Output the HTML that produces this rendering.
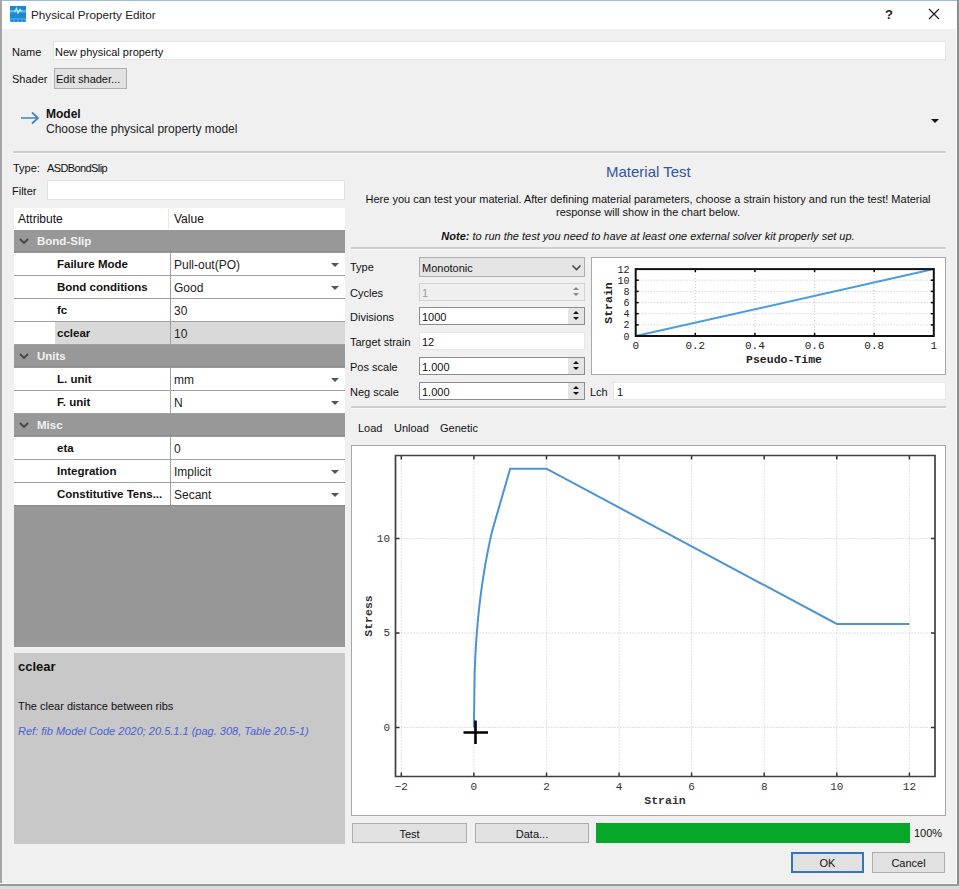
<!DOCTYPE html>
<html><head><meta charset="utf-8">
<style>
*{box-sizing:border-box;margin:0;padding:0}
html,body{width:959px;height:889px;overflow:hidden;background:#f0f0f0}
body{position:relative;font-family:"Liberation Sans",sans-serif;font-size:11px;color:#111}
.a{position:absolute}
.t{position:absolute;white-space:nowrap;line-height:1}
.b{font-weight:bold}
.dd{position:absolute;width:0;height:0;border-left:4px solid transparent;border-right:4px solid transparent;border-top:4px solid #555}
</style></head><body>
<div class="a" style="left:0px;top:0px;width:959px;height:1px;background:#9dbcdc;"></div>
<div class="a" style="left:0px;top:1px;width:959px;height:28px;background:#fff;"></div>
<div class="a" style="left:0px;top:0px;width:2px;height:889px;background:#a5a5a5;"></div>
<div class="a" style="left:956px;top:1px;width:1px;height:884px;background:#fafafa;"></div>
<div class="a" style="left:957px;top:0px;width:2px;height:889px;background:#8e8e8e;"></div>
<div class="a" style="left:0px;top:883px;width:957px;height:1px;background:#fafafa;"></div>
<div class="a" style="left:0px;top:884px;width:959px;height:2px;background:#999;"></div>
<div class="a" style="left:0px;top:886px;width:959px;height:3px;background:#dcdcdc;"></div>
<svg class="a" style="left:10px;top:6px" width="16" height="16"><rect width="16" height="16" fill="#1d88cc"/><rect y="4" width="16" height="2.5" fill="#5ab8e8"/><rect y="12" width="16" height="4" fill="#3fa3e8"/><path d="M1.5 14.5 H3 M5 14.5 H7 M9 14.5 H11 M13 14.5 H14.5" stroke="#1a6fb8" stroke-width="1.4"/><path d="M4.5 6 L6.5 2.5 L8 7 L10 3.5 L11.5 5.5" fill="none" stroke="#a8eaff" stroke-width="1.5"/></svg>
<div class="t" style="left:31px;top:9px;font-size:11.7px;color:#222">Physical Property Editor</div>
<div class="t" style="left:885px;top:8px;font-size:13px;font-weight:bold;color:#222">?</div>
<svg class="a" style="left:928px;top:8px" width="12" height="12"><path d="M1 1 L11 11 M11 1 L1 11" stroke="#222" stroke-width="1.3"/></svg>
<div class="t" style="left:12px;top:47px;">Name</div>
<div class="a" style="left:53px;top:41px;width:893px;height:19px;background:#fff;border:1px solid #e6e6e6"></div>
<div class="t" style="left:55px;top:47px;">New physical property</div>
<div class="t" style="left:12px;top:74px;">Shader</div>
<div class="a" style="left:54px;top:68px;width:73px;height:21px;background:#e1e1e1;border:1px solid #adadad"></div>
<div class="t" style="left:56px;top:74px;">Edit shader...</div>
<svg class="a" style="left:20px;top:110px" width="20" height="16"><path d="M1 8 H18 M12 2.5 L18 8 L12 13.5" fill="none" stroke="#3a86c8" stroke-width="1.7"/></svg>
<div class="t" style="left:46px;top:108px;font-size:12px;font-weight:bold">Model</div>
<div class="t" style="left:46px;top:123px;font-size:12px;color:#222">Choose the physical property model</div>
<div class="a" style="left:931px;top:119px;width:0;height:0;border-left:4px solid transparent;border-right:4px solid transparent;border-top:4px solid #111"></div>
<div class="a" style="left:13px;top:151px;width:933px;height:2px;background:#cecece;"></div>
<div class="a" style="left:13px;top:153px;width:933px;height:1px;background:#f8f8f8;"></div>
<div class="t" style="left:13px;top:163px;">Type:</div>
<div class="t" style="left:47px;top:163px;letter-spacing:-0.6px">ASDBondSlip</div>
<div class="t" style="left:12px;top:186px;">Filter</div>
<div class="a" style="left:47px;top:180px;width:298px;height:20px;background:#fff;border:1px solid #e3e3e3"></div>
<div class="a" style="left:14px;top:208px;width:331px;height:22px;background:#fff;"></div>
<div class="a" style="left:168px;top:209px;width:1px;height:20px;background:#e8e8e8;"></div>
<div class="t" style="left:18px;top:213px;font-size:12px">Attribute</div>
<div class="t" style="left:174px;top:213px;font-size:12px">Value</div>
<div class="a" style="left:14px;top:230px;width:331px;height:23px;background:#989898;"></div>
<div class="a" style="left:14px;top:251px;width:331px;height:1px;background:#8c8c8c;"></div>
<svg class="a" style="left:19px;top:238px" width="10" height="7"><path d="M1 1 L5 5 L9 1" fill="none" stroke="#444" stroke-width="1.8"/></svg>
<div class="t" style="left:37px;top:236px;font-size:11.5px;font-weight:bold;color:#f2f2f2">Bond-Slip</div>
<div class="a" style="left:14px;top:253px;width:331px;height:23px;background:#fff;"></div>
<div class="a" style="left:14px;top:275px;width:331px;height:1px;background:#a0a0a0;"></div>
<div class="a" style="left:170px;top:253px;width:1px;height:23px;background:#a0a0a0;"></div>
<div class="t" style="left:57px;top:259px;font-size:11.5px;font-weight:bold;color:#111">Failure Mode</div>
<div class="t" style="left:174px;top:259px;font-size:12px;color:#222">Pull-out(PO)</div>
<div class="dd" style="left:331px;top:263px"></div>
<div class="a" style="left:14px;top:276px;width:331px;height:23px;background:#fff;"></div>
<div class="a" style="left:14px;top:298px;width:331px;height:1px;background:#a0a0a0;"></div>
<div class="a" style="left:170px;top:276px;width:1px;height:23px;background:#a0a0a0;"></div>
<div class="t" style="left:57px;top:282px;font-size:11.5px;font-weight:bold;color:#111">Bond conditions</div>
<div class="t" style="left:174px;top:282px;font-size:12px;color:#222">Good</div>
<div class="dd" style="left:331px;top:286px"></div>
<div class="a" style="left:14px;top:299px;width:331px;height:23px;background:#fff;"></div>
<div class="a" style="left:14px;top:321px;width:331px;height:1px;background:#a0a0a0;"></div>
<div class="a" style="left:170px;top:299px;width:1px;height:23px;background:#a0a0a0;"></div>
<div class="t" style="left:57px;top:305px;font-size:11.5px;font-weight:bold;color:#111">fc</div>
<div class="t" style="left:174px;top:305px;font-size:12px;color:#222">30</div>
<div class="a" style="left:14px;top:322px;width:331px;height:23px;background:#fff;"></div>
<div class="a" style="left:55px;top:322px;width:290px;height:22px;background:#d9d9d9;"></div>
<div class="a" style="left:14px;top:344px;width:331px;height:1px;background:#a0a0a0;"></div>
<div class="a" style="left:170px;top:322px;width:1px;height:23px;background:#a0a0a0;"></div>
<div class="t" style="left:57px;top:328px;font-size:11.5px;font-weight:bold;color:#111">cclear</div>
<div class="t" style="left:174px;top:328px;font-size:12px;color:#222">10</div>
<div class="a" style="left:14px;top:345px;width:331px;height:23px;background:#989898;"></div>
<div class="a" style="left:14px;top:366px;width:331px;height:1px;background:#8c8c8c;"></div>
<svg class="a" style="left:19px;top:353px" width="10" height="7"><path d="M1 1 L5 5 L9 1" fill="none" stroke="#444" stroke-width="1.8"/></svg>
<div class="t" style="left:37px;top:351px;font-size:11.5px;font-weight:bold;color:#f2f2f2">Units</div>
<div class="a" style="left:14px;top:368px;width:331px;height:23px;background:#fff;"></div>
<div class="a" style="left:14px;top:390px;width:331px;height:1px;background:#a0a0a0;"></div>
<div class="a" style="left:170px;top:368px;width:1px;height:23px;background:#a0a0a0;"></div>
<div class="t" style="left:57px;top:374px;font-size:11.5px;font-weight:bold;color:#111">L. unit</div>
<div class="t" style="left:174px;top:374px;font-size:12px;color:#222">mm</div>
<div class="dd" style="left:331px;top:378px"></div>
<div class="a" style="left:14px;top:391px;width:331px;height:23px;background:#fff;"></div>
<div class="a" style="left:14px;top:413px;width:331px;height:1px;background:#a0a0a0;"></div>
<div class="a" style="left:170px;top:391px;width:1px;height:23px;background:#a0a0a0;"></div>
<div class="t" style="left:57px;top:397px;font-size:11.5px;font-weight:bold;color:#111">F. unit</div>
<div class="t" style="left:174px;top:397px;font-size:12px;color:#222">N</div>
<div class="dd" style="left:331px;top:401px"></div>
<div class="a" style="left:14px;top:414px;width:331px;height:23px;background:#989898;"></div>
<div class="a" style="left:14px;top:435px;width:331px;height:1px;background:#8c8c8c;"></div>
<svg class="a" style="left:19px;top:422px" width="10" height="7"><path d="M1 1 L5 5 L9 1" fill="none" stroke="#444" stroke-width="1.8"/></svg>
<div class="t" style="left:37px;top:420px;font-size:11.5px;font-weight:bold;color:#f2f2f2">Misc</div>
<div class="a" style="left:14px;top:437px;width:331px;height:23px;background:#fff;"></div>
<div class="a" style="left:14px;top:459px;width:331px;height:1px;background:#a0a0a0;"></div>
<div class="a" style="left:170px;top:437px;width:1px;height:23px;background:#a0a0a0;"></div>
<div class="t" style="left:57px;top:443px;font-size:11.5px;font-weight:bold;color:#111">eta</div>
<div class="t" style="left:174px;top:443px;font-size:12px;color:#222">0</div>
<div class="a" style="left:14px;top:460px;width:331px;height:23px;background:#fff;"></div>
<div class="a" style="left:14px;top:482px;width:331px;height:1px;background:#a0a0a0;"></div>
<div class="a" style="left:170px;top:460px;width:1px;height:23px;background:#a0a0a0;"></div>
<div class="t" style="left:57px;top:466px;font-size:11.5px;font-weight:bold;color:#111">Integration</div>
<div class="t" style="left:174px;top:466px;font-size:12px;color:#222">Implicit</div>
<div class="dd" style="left:331px;top:470px"></div>
<div class="a" style="left:14px;top:483px;width:331px;height:23px;background:#fff;"></div>
<div class="a" style="left:14px;top:505px;width:331px;height:1px;background:#a0a0a0;"></div>
<div class="a" style="left:170px;top:483px;width:1px;height:23px;background:#a0a0a0;"></div>
<div class="t" style="left:57px;top:489px;font-size:11.5px;font-weight:bold;color:#111">Constitutive Tens...</div>
<div class="t" style="left:174px;top:489px;font-size:12px;color:#222">Secant</div>
<div class="dd" style="left:331px;top:493px"></div>
<div class="a" style="left:14px;top:505px;width:331px;height:1px;background:#888;"></div>
<div class="a" style="left:14px;top:506px;width:331px;height:141px;background:#979797;"></div>
<div class="a" style="left:14px;top:653px;width:331px;height:191px;background:#c8c8c8;"></div>
<div class="t" style="left:18px;top:660px;font-size:13px;font-weight:bold;color:#111">cclear</div>
<div class="t" style="left:18px;top:701px;color:#111">The clear distance between ribs</div>
<div class="t" style="left:18px;top:726px;font-style:italic;color:#4c5fd6">Ref: fib Model Code 2020; 20.5.1.1 (pag. 308, Table 20.5-1)</div>
<div class="t" style="left:606px;top:164px;font-size:15px;color:#34559c">Material Test</div>
<div class="a" style="left:352px;top:193px;width:592px;text-align:center;line-height:13px;color:#111">Here you can test your material. After defining material parameters, choose a strain history and run the test! Material<br>response will show in the chart below.</div>
<div class="a" style="left:352px;top:230px;width:592px;text-align:center;line-height:13px;font-style:italic;color:#111"><b>Note:</b> to run the test you need to have at least one external solver kit properly set up.</div>
<div class="a" style="left:351px;top:247px;width:595px;height:2px;background:#cecece;"></div>
<div class="a" style="left:351px;top:249px;width:595px;height:1px;background:#f8f8f8;"></div>
<div class="t" style="left:350px;top:262px;">Type</div>
<div class="t" style="left:350px;top:288px;">Cycles</div>
<div class="t" style="left:350px;top:312px;">Divisions</div>
<div class="t" style="left:350px;top:337px;">Target strain</div>
<div class="t" style="left:350px;top:362px;">Pos scale</div>
<div class="t" style="left:350px;top:387px;">Neg scale</div>
<div class="a" style="left:419px;top:257px;width:166px;height:20px;background:#e5e5e5;border:1px solid #adadad"></div>
<div class="t" style="left:422px;top:263px;">Monotonic</div>
<svg class="a" style="left:571px;top:264px" width="11" height="8"><path d="M1.5 1.5 L5.5 5.5 L9.5 1.5" fill="none" stroke="#4a4a4a" stroke-width="1.6"/></svg>
<div class="a" style="left:419px;top:283px;width:166px;height:18px;background:#efefef;border:1px solid #d2d2d2"></div>
<div class="a" style="left:568px;top:284px;width:16px;height:16px;background:#efefef;"></div>
<div class="a" style="left:573px;top:287px;width:0;height:0;border-left:3px solid transparent;border-right:3px solid transparent;border-bottom:3px solid #8a8a8a"></div>
<div class="a" style="left:573px;top:293px;width:0;height:0;border-left:3px solid transparent;border-right:3px solid transparent;border-top:3px solid #8a8a8a"></div>
<div class="t" style="left:422px;top:288px;color:#9a9a9a">1</div>
<div class="a" style="left:419px;top:307px;width:166px;height:18px;background:#fff;border:1px solid #8c8c8c"></div>
<div class="a" style="left:568px;top:308px;width:16px;height:16px;background:#e4e4e4;"></div>
<div class="a" style="left:573px;top:311px;width:0;height:0;border-left:3px solid transparent;border-right:3px solid transparent;border-bottom:3px solid #111"></div>
<div class="a" style="left:573px;top:317px;width:0;height:0;border-left:3px solid transparent;border-right:3px solid transparent;border-top:3px solid #111"></div>
<div class="t" style="left:422px;top:312px;color:#111">1000</div>
<div class="a" style="left:419px;top:332px;width:166px;height:18px;background:#fff;border:1px solid #e8e8e8"></div>
<div class="t" style="left:422px;top:337px;">12</div>
<div class="a" style="left:419px;top:357px;width:166px;height:18px;background:#fff;border:1px solid #8c8c8c"></div>
<div class="a" style="left:568px;top:358px;width:16px;height:16px;background:#e4e4e4;"></div>
<div class="a" style="left:573px;top:361px;width:0;height:0;border-left:3px solid transparent;border-right:3px solid transparent;border-bottom:3px solid #111"></div>
<div class="a" style="left:573px;top:367px;width:0;height:0;border-left:3px solid transparent;border-right:3px solid transparent;border-top:3px solid #111"></div>
<div class="t" style="left:422px;top:362px;color:#111">1.000</div>
<div class="a" style="left:419px;top:382px;width:166px;height:18px;background:#fff;border:1px solid #8c8c8c"></div>
<div class="a" style="left:568px;top:383px;width:16px;height:16px;background:#e4e4e4;"></div>
<div class="a" style="left:573px;top:386px;width:0;height:0;border-left:3px solid transparent;border-right:3px solid transparent;border-bottom:3px solid #111"></div>
<div class="a" style="left:573px;top:392px;width:0;height:0;border-left:3px solid transparent;border-right:3px solid transparent;border-top:3px solid #111"></div>
<div class="t" style="left:422px;top:387px;color:#111">1.000</div>
<div class="t" style="left:590px;top:387px;">Lch</div>
<div class="a" style="left:613px;top:382px;width:333px;height:18px;background:#fff;border:1px solid #e8e8e8"></div>
<div class="t" style="left:617px;top:387px;">1</div>
<div class="a" style="left:351px;top:406px;width:595px;height:2px;background:#cecece;"></div>
<div class="a" style="left:351px;top:408px;width:595px;height:1px;background:#f8f8f8;"></div>
<div class="t" style="left:358px;top:423px;">Load</div>
<div class="t" style="left:394px;top:423px;">Unload</div>
<div class="t" style="left:440px;top:423px;">Genetic</div>
<svg class="a" style="left:0;top:0" width="959" height="889" viewBox="0 0 959 889">
<rect x="591.5" y="257.5" width="354" height="117" fill="#fff" stroke="#a8a8a8" stroke-width="1"/>
<line x1="695.3" y1="269.1" x2="695.3" y2="336.0" stroke="#c4c4c4" stroke-width="1" stroke-dasharray="1,2"/>
<line x1="754.9" y1="269.1" x2="754.9" y2="336.0" stroke="#c4c4c4" stroke-width="1" stroke-dasharray="1,2"/>
<line x1="814.6" y1="269.1" x2="814.6" y2="336.0" stroke="#c4c4c4" stroke-width="1" stroke-dasharray="1,2"/>
<line x1="874.2" y1="269.1" x2="874.2" y2="336.0" stroke="#c4c4c4" stroke-width="1" stroke-dasharray="1,2"/>
<line x1="635.7" y1="324.9" x2="933.8" y2="324.9" stroke="#c4c4c4" stroke-width="1" stroke-dasharray="1,2"/>
<line x1="635.7" y1="324.9" x2="638.7" y2="324.9" stroke="#000" stroke-width="1.5"/>
<line x1="930.8" y1="324.9" x2="933.8" y2="324.9" stroke="#000" stroke-width="1.5"/>
<line x1="635.7" y1="313.7" x2="933.8" y2="313.7" stroke="#c4c4c4" stroke-width="1" stroke-dasharray="1,2"/>
<line x1="635.7" y1="313.7" x2="638.7" y2="313.7" stroke="#000" stroke-width="1.5"/>
<line x1="930.8" y1="313.7" x2="933.8" y2="313.7" stroke="#000" stroke-width="1.5"/>
<line x1="635.7" y1="302.6" x2="933.8" y2="302.6" stroke="#c4c4c4" stroke-width="1" stroke-dasharray="1,2"/>
<line x1="635.7" y1="302.6" x2="638.7" y2="302.6" stroke="#000" stroke-width="1.5"/>
<line x1="930.8" y1="302.6" x2="933.8" y2="302.6" stroke="#000" stroke-width="1.5"/>
<line x1="635.7" y1="291.4" x2="933.8" y2="291.4" stroke="#c4c4c4" stroke-width="1" stroke-dasharray="1,2"/>
<line x1="635.7" y1="291.4" x2="638.7" y2="291.4" stroke="#000" stroke-width="1.5"/>
<line x1="930.8" y1="291.4" x2="933.8" y2="291.4" stroke="#000" stroke-width="1.5"/>
<line x1="635.7" y1="280.2" x2="933.8" y2="280.2" stroke="#c4c4c4" stroke-width="1" stroke-dasharray="1,2"/>
<line x1="635.7" y1="280.2" x2="638.7" y2="280.2" stroke="#000" stroke-width="1.5"/>
<line x1="930.8" y1="280.2" x2="933.8" y2="280.2" stroke="#000" stroke-width="1.5"/>
<line x1="695.3" y1="336.0" x2="695.3" y2="333.0" stroke="#000" stroke-width="1.5"/>
<line x1="695.3" y1="269.1" x2="695.3" y2="272.1" stroke="#000" stroke-width="1.5"/>
<line x1="754.9" y1="336.0" x2="754.9" y2="333.0" stroke="#000" stroke-width="1.5"/>
<line x1="754.9" y1="269.1" x2="754.9" y2="272.1" stroke="#000" stroke-width="1.5"/>
<line x1="814.6" y1="336.0" x2="814.6" y2="333.0" stroke="#000" stroke-width="1.5"/>
<line x1="814.6" y1="269.1" x2="814.6" y2="272.1" stroke="#000" stroke-width="1.5"/>
<line x1="874.2" y1="336.0" x2="874.2" y2="333.0" stroke="#000" stroke-width="1.5"/>
<line x1="874.2" y1="269.1" x2="874.2" y2="272.1" stroke="#000" stroke-width="1.5"/>
<line x1="635.7" y1="336.0" x2="933.8" y2="269.1" stroke="#4b9ce0" stroke-width="2"/>
<rect x="635.7" y="269.1" width="298.1" height="66.9" fill="none" stroke="#111" stroke-width="2"/>
<text x="629.5" y="339.5" text-anchor="end" font-family="Liberation Mono" font-size="10" fill="#222">0</text>
<text x="629.5" y="328.4" text-anchor="end" font-family="Liberation Mono" font-size="10" fill="#222">2</text>
<text x="629.5" y="317.2" text-anchor="end" font-family="Liberation Mono" font-size="10" fill="#222">4</text>
<text x="629.5" y="306.1" text-anchor="end" font-family="Liberation Mono" font-size="10" fill="#222">6</text>
<text x="629.5" y="294.9" text-anchor="end" font-family="Liberation Mono" font-size="10" fill="#222">8</text>
<text x="629.5" y="283.8" text-anchor="end" font-family="Liberation Mono" font-size="10" fill="#222">10</text>
<text x="629.5" y="272.6" text-anchor="end" font-family="Liberation Mono" font-size="10" fill="#222">12</text>
<text x="635.7" y="348.5" text-anchor="middle" font-family="Liberation Mono" font-size="11" fill="#222">0</text>
<text x="695.3" y="348.5" text-anchor="middle" font-family="Liberation Mono" font-size="11" fill="#222">0.2</text>
<text x="754.9" y="348.5" text-anchor="middle" font-family="Liberation Mono" font-size="11" fill="#222">0.4</text>
<text x="814.6" y="348.5" text-anchor="middle" font-family="Liberation Mono" font-size="11" fill="#222">0.6</text>
<text x="874.2" y="348.5" text-anchor="middle" font-family="Liberation Mono" font-size="11" fill="#222">0.8</text>
<text x="933.8" y="348.5" text-anchor="middle" font-family="Liberation Mono" font-size="11" fill="#222">1</text>
<text x="784" y="362.5" text-anchor="middle" font-family="Liberation Mono" font-weight="bold" font-size="11.5" fill="#222">Pseudo-Time</text>
<text transform="translate(612,303) rotate(-90)" text-anchor="middle" font-family="Liberation Mono" font-weight="bold" font-size="11.5" fill="#222">Strain</text>
<rect x="351.5" y="445.5" width="594" height="370" fill="#fff" stroke="#a8a8a8" stroke-width="1"/>
<line x1="401.3" y1="455.5" x2="401.3" y2="776.5" stroke="#c4c4c4" stroke-width="1" stroke-dasharray="1,2"/>
<line x1="401.3" y1="776.5" x2="401.3" y2="772.5" stroke="#333" stroke-width="1.5"/>
<line x1="401.3" y1="455.5" x2="401.3" y2="459.5" stroke="#333" stroke-width="1.5"/>
<text x="401.3" y="790" text-anchor="middle" font-family="Liberation Mono" font-size="11" fill="#333">−2</text>
<line x1="473.9" y1="455.5" x2="473.9" y2="776.5" stroke="#c4c4c4" stroke-width="1" stroke-dasharray="1,2"/>
<line x1="473.9" y1="776.5" x2="473.9" y2="772.5" stroke="#333" stroke-width="1.5"/>
<line x1="473.9" y1="455.5" x2="473.9" y2="459.5" stroke="#333" stroke-width="1.5"/>
<text x="473.9" y="790" text-anchor="middle" font-family="Liberation Mono" font-size="11" fill="#333">0</text>
<line x1="546.5" y1="455.5" x2="546.5" y2="776.5" stroke="#c4c4c4" stroke-width="1" stroke-dasharray="1,2"/>
<line x1="546.5" y1="776.5" x2="546.5" y2="772.5" stroke="#333" stroke-width="1.5"/>
<line x1="546.5" y1="455.5" x2="546.5" y2="459.5" stroke="#333" stroke-width="1.5"/>
<text x="546.5" y="790" text-anchor="middle" font-family="Liberation Mono" font-size="11" fill="#333">2</text>
<line x1="619.1" y1="455.5" x2="619.1" y2="776.5" stroke="#c4c4c4" stroke-width="1" stroke-dasharray="1,2"/>
<line x1="619.1" y1="776.5" x2="619.1" y2="772.5" stroke="#333" stroke-width="1.5"/>
<line x1="619.1" y1="455.5" x2="619.1" y2="459.5" stroke="#333" stroke-width="1.5"/>
<text x="619.1" y="790" text-anchor="middle" font-family="Liberation Mono" font-size="11" fill="#333">4</text>
<line x1="691.6" y1="455.5" x2="691.6" y2="776.5" stroke="#c4c4c4" stroke-width="1" stroke-dasharray="1,2"/>
<line x1="691.6" y1="776.5" x2="691.6" y2="772.5" stroke="#333" stroke-width="1.5"/>
<line x1="691.6" y1="455.5" x2="691.6" y2="459.5" stroke="#333" stroke-width="1.5"/>
<text x="691.6" y="790" text-anchor="middle" font-family="Liberation Mono" font-size="11" fill="#333">6</text>
<line x1="764.2" y1="455.5" x2="764.2" y2="776.5" stroke="#c4c4c4" stroke-width="1" stroke-dasharray="1,2"/>
<line x1="764.2" y1="776.5" x2="764.2" y2="772.5" stroke="#333" stroke-width="1.5"/>
<line x1="764.2" y1="455.5" x2="764.2" y2="459.5" stroke="#333" stroke-width="1.5"/>
<text x="764.2" y="790" text-anchor="middle" font-family="Liberation Mono" font-size="11" fill="#333">8</text>
<line x1="836.8" y1="455.5" x2="836.8" y2="776.5" stroke="#c4c4c4" stroke-width="1" stroke-dasharray="1,2"/>
<line x1="836.8" y1="776.5" x2="836.8" y2="772.5" stroke="#333" stroke-width="1.5"/>
<line x1="836.8" y1="455.5" x2="836.8" y2="459.5" stroke="#333" stroke-width="1.5"/>
<text x="836.8" y="790" text-anchor="middle" font-family="Liberation Mono" font-size="11" fill="#333">10</text>
<line x1="909.4" y1="455.5" x2="909.4" y2="776.5" stroke="#c4c4c4" stroke-width="1" stroke-dasharray="1,2"/>
<line x1="909.4" y1="776.5" x2="909.4" y2="772.5" stroke="#333" stroke-width="1.5"/>
<line x1="909.4" y1="455.5" x2="909.4" y2="459.5" stroke="#333" stroke-width="1.5"/>
<text x="909.4" y="790" text-anchor="middle" font-family="Liberation Mono" font-size="11" fill="#333">12</text>
<line x1="395.5" y1="727.5" x2="935.0" y2="727.5" stroke="#c4c4c4" stroke-width="1" stroke-dasharray="1,2"/>
<line x1="395.5" y1="727.5" x2="399.5" y2="727.5" stroke="#333" stroke-width="1.5"/>
<line x1="931.0" y1="727.5" x2="935.0" y2="727.5" stroke="#333" stroke-width="1.5"/>
<text x="390" y="730.5" text-anchor="end" font-family="Liberation Mono" font-size="11" fill="#333">0</text>
<line x1="395.5" y1="633.0" x2="935.0" y2="633.0" stroke="#c4c4c4" stroke-width="1" stroke-dasharray="1,2"/>
<line x1="395.5" y1="633.0" x2="399.5" y2="633.0" stroke="#333" stroke-width="1.5"/>
<line x1="931.0" y1="633.0" x2="935.0" y2="633.0" stroke="#333" stroke-width="1.5"/>
<text x="390" y="636.0" text-anchor="end" font-family="Liberation Mono" font-size="11" fill="#333">5</text>
<line x1="395.5" y1="538.5" x2="935.0" y2="538.5" stroke="#c4c4c4" stroke-width="1" stroke-dasharray="1,2"/>
<line x1="395.5" y1="538.5" x2="399.5" y2="538.5" stroke="#333" stroke-width="1.5"/>
<line x1="931.0" y1="538.5" x2="935.0" y2="538.5" stroke="#333" stroke-width="1.5"/>
<text x="390" y="541.5" text-anchor="end" font-family="Liberation Mono" font-size="11" fill="#333">10</text>
<polyline points="473.90,727.50 474.63,673.38 475.35,656.09 476.08,643.51 476.80,633.27 477.53,624.47 478.25,616.68 478.98,609.63 479.71,603.16 480.43,597.16 481.16,591.55 481.88,586.27 482.61,581.27 483.34,576.51 484.06,571.97 484.79,567.61 485.51,563.43 486.24,559.41 486.96,555.52 487.69,551.76 488.42,548.11 489.14,544.58 489.87,541.14 490.59,537.80 491.32,534.54 492.04,531.37 510.19,468.70 546.48,468.70 836.80,623.98 909.38,623.98" fill="none" stroke="#4b93d6" stroke-width="2"/>
<path d="M395.5 455.5 H935.0 V776.5 H395.5 Z" fill="none" stroke="#404040" stroke-width="1.7"/>
<text x="665" y="804" text-anchor="middle" font-family="Liberation Mono" font-weight="bold" font-size="11.5" fill="#333">Strain</text>
<text transform="translate(371.5,616) rotate(-90)" text-anchor="middle" font-family="Liberation Mono" font-weight="bold" font-size="11.5" fill="#333">Stress</text>
<path d="M463.5 732.5 H488 M475.5 720.5 V744" stroke="#000" stroke-width="2.6"/>
</svg>
<div class="a" style="left:352px;top:823px;width:115px;height:20px;background:#e1e1e1;border:1px solid #adadad"></div>
<div class="t" style="left:352px;top:829px;width:115px;text-align:center">Test</div>
<div class="a" style="left:475px;top:823px;width:114px;height:20px;background:#e1e1e1;border:1px solid #adadad"></div>
<div class="t" style="left:475px;top:829px;width:114px;text-align:center">Data...</div>
<div class="a" style="left:596px;top:823px;width:314px;height:20px;background:#07a82a;"></div>
<div class="t" style="left:914px;top:828px;">100%</div>
<div class="a" style="left:791px;top:852px;width:73px;height:21px;background:#e1e1e1;border:2px solid #3474c0"></div>
<div class="t" style="left:791px;top:858px;width:73px;text-align:center">OK</div>
<div class="a" style="left:872px;top:852px;width:73px;height:21px;background:#e1e1e1;border:1px solid #adadad"></div>
<div class="t" style="left:872px;top:858px;width:73px;text-align:center">Cancel</div>
</body></html>
